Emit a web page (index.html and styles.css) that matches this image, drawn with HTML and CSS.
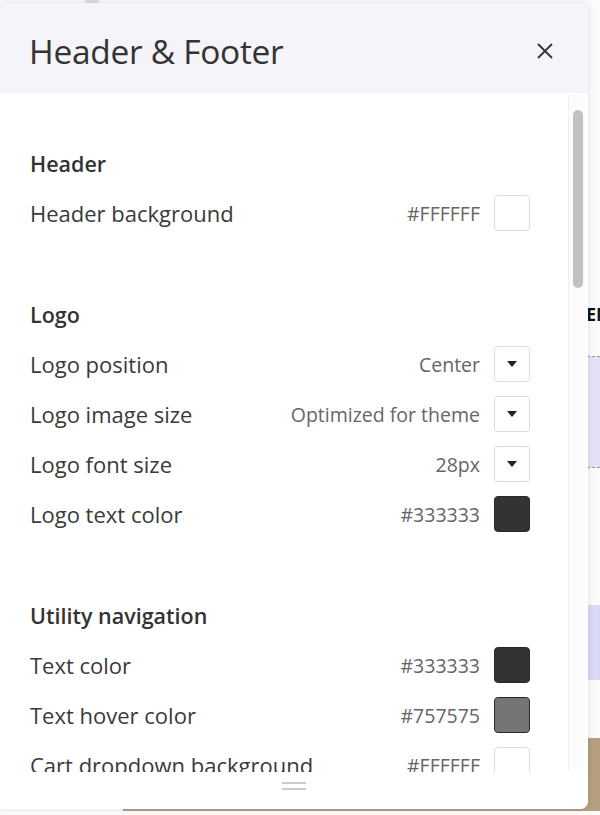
FILE: index.html
```html
<!DOCTYPE html>
<html lang="en">
<head>
  <meta charset="UTF-8"/>
  <meta name="viewport" content="width=device-width,initial-scale=1"/>
  <title>Theme settings</title>
  <link rel="stylesheet" href="styles.css">
</head>
<body>
  <!-- storefront preview behind the drawer -->
  <div class="site">
    <div class="site-top"><span class="tab"></span></div>
    <div class="site-nav"><span>EN</span></div>
    <div class="site-band"></div>
    <div class="site-gap"></div>
    <div class="site-band light"></div>
    <div class="site-gap short"></div>
    <div class="site-footer"></div>
  </div>

  <aside class="drawer">
    <div class="drawer-head">
      <h1>Header &amp; Footer</h1>
      <button class="close" aria-label="Close">
        <svg width="18" height="18" viewBox="0 0 18 18"><path d="M2 2L16 16M16 2L2 16" stroke="#333" stroke-width="1.8" fill="none"/></svg>
      </button>
    </div>

    <div class="drawer-body">
      <div class="settings">
        <section class="group">
          <h2>Header</h2>
          <div class="row">
            <span class="label">Header background</span>
            <span class="value">#FFFFFF</span>
            <span class="swatch white"></span>
          </div>
        </section>

        <section class="group">
          <h2>Logo</h2>
          <div class="row">
            <span class="label">Logo position</span>
            <span class="value">Center</span>
            <span class="select"><i class="caret"></i></span>
          </div>
          <div class="row">
            <span class="label">Logo image size</span>
            <span class="value">Optimized for theme</span>
            <span class="select"><i class="caret"></i></span>
          </div>
          <div class="row">
            <span class="label">Logo font size</span>
            <span class="value">28px</span>
            <span class="select"><i class="caret"></i></span>
          </div>
          <div class="row">
            <span class="label">Logo text color</span>
            <span class="value">#333333</span>
            <span class="swatch" style="background:#333333"></span>
          </div>
        </section>

        <section class="group">
          <h2>Utility navigation</h2>
          <div class="row">
            <span class="label">Text color</span>
            <span class="value">#333333</span>
            <span class="swatch" style="background:#333333"></span>
          </div>
          <div class="row">
            <span class="label">Text hover color</span>
            <span class="value">#757575</span>
            <span class="swatch" style="background:#757575"></span>
          </div>
          <div class="row">
            <span class="label">Cart dropdown background</span>
            <span class="value">#FFFFFF</span>
            <span class="swatch white"></span>
          </div>
        </section>
      </div>

      <div class="scrollbar"><div class="thumb"></div></div>
    </div>

    <div class="drawer-foot"><span class="grip"></span></div>
  </aside>
</body>
</html>
```

FILE: styles.css
```css
:root {
  --text: #333;
  --text-light: #666;
  --border: #dcdcdc;
  --head-bg: #f4f4f9;
  --tan: #b59f80;
  --lavender: #e4e2f6;
}

* {
  box-sizing: border-box;
  margin: 0;
  padding: 0;
}

body {
  width: 600px;
  height: 815px;
  overflow: hidden;
  position: relative;
  background: #fff;
  font-family: 'Open Sans', 'Noto Sans', sans-serif;
  color: var(--text);
}

/* ---- page behind ---- */

.site {
  display: flex;
  flex-direction: column;
  height: 815px;
  background: #fbfbfb;
}

.site-top {
  height: 300px;
}

.tab {
  display: block;
  width: 14px;
  height: 3px;
  margin-left: 85px;
  background: #ddd;
}

.site-nav {
  height: 56px;
  padding-top: 2px;
  padding-left: 586px;
  font-weight: 700;
  font-size: 18px;
  color: #111;
  white-space: nowrap;
  overflow: hidden;
}

.site-band {
  height: 112px;
  background: var(--lavender);
  border-top: 1px dashed #999;
  border-bottom: 1px dashed #999;
}

.site-band.light {
  height: 75px;
  background: #d9d9f6;
  border: none;
}

.site-gap {
  height: 137px;
}

.site-gap.short {
  height: 58px;
}

.site-footer {
  height: 73px;
  margin-left: 123px;
  background: var(--tan);
}

/* ---- drawer ---- */

.drawer {
  position: absolute;
  top: 3px;
  left: 0;
  width: 588px;
  height: 806px;
  display: flex;
  flex-direction: column;
  background: #fff;
  border-radius: 0 0 8px 0;
  box-shadow: 0 0 6px rgba(0,0,0,0.12);
  overflow: hidden;
}

.drawer-head {
  height: 90px;
  flex-shrink: 0;
  display: flex;
  align-items: center;
  justify-content: space-between;
  padding: 6px 34px 0 29px;
  background: var(--head-bg);
}

.drawer-head h1 {
  font-size: 33.5px;
  font-weight: 400;
  letter-spacing: -0.3px;
  color: #333;
}

.close {
  border: none;
  background: none;
  width: 18px;
  height: 18px;
  display: flex;
  cursor: pointer;
}

.drawer-body {
  flex: 1;
  display: flex;
  overflow: hidden;
}

.settings {
  flex: 1;
  padding: 45px 38px 0 30px;
  display: flex;
  flex-direction: column;
  gap: 51px;
}

.group h2 {
  height: 50px;
  display: flex;
  align-items: center;
  font-size: 21.5px;
  font-weight: 600;
  color: #333;
}

.row {
  height: 50px;
  display: flex;
  align-items: center;
  gap: 14px;
}

.label {
  flex: 1;
  font-size: 22px;
  color: #3a3a3a;
}

.value {
  font-size: 19.5px;
  color: var(--text-light);
}

.swatch,
.select {
  width: 36px;
  height: 36px;
  border-radius: 4px;
  border: 1px solid #2a2a2a;
  flex-shrink: 0;
}

.swatch.white,
.select {
  background: #fff;
  border-color: var(--border);
}

.select {
  display: flex;
  align-items: center;
  justify-content: center;
}

.caret {
  width: 0;
  height: 0;
  border-left: 5px solid transparent;
  border-right: 5px solid transparent;
  border-top: 6px solid #222;
}

.scrollbar {
  width: 18px;
  margin: 2px 2px 2px 0;
  padding: 15px 3px 0 4px;
  border-left: 1px solid #f0f0f0;
  background: #fcfcfc;
  flex-shrink: 0;
}

.thumb {
  height: 178px;
  border-radius: 6px;
  background: #c1c1c1;
}

.drawer-foot {
  height: 37px;
  flex-shrink: 0;
  display: flex;
  justify-content: center;
  padding-top: 10px;
  background: #fff;
}

.grip {
  width: 24px;
  height: 8px;
  border-top: 2px solid #ccc;
  border-bottom: 2px solid #ccc;
}
```
